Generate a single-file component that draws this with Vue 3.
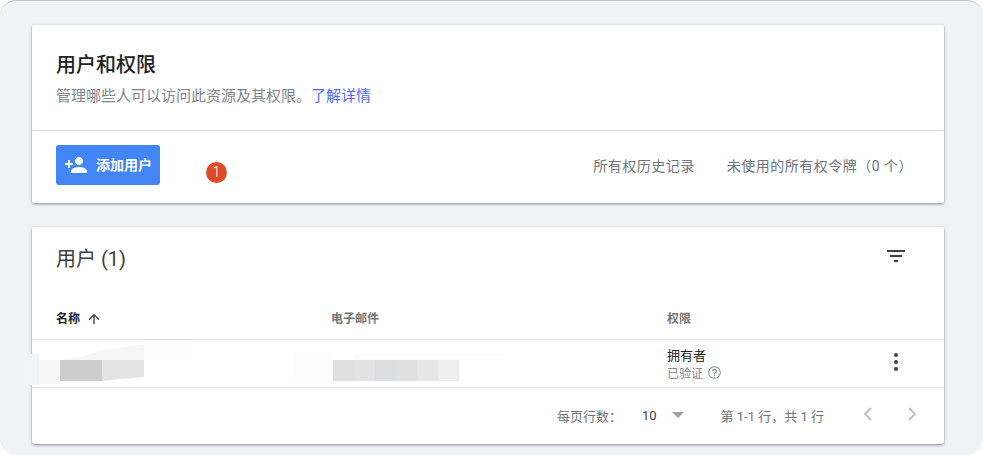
<script setup>
const nameBlocks = [
  { x: 24, y: 354, w: 15, h: 31, c: '#f0f3f8' },
  { x: 39, y: 360, w: 21, h: 24, c: '#f6f6f6' },
  { x: 60, y: 360, w: 42, h: 21, c: '#cdcdcd' },
  { x: 102, y: 360, w: 42, h: 21, c: '#e3e3e3', clip: 'polygon(0 0, 100% 0, 100% 80%, 0 100%)' },
  { x: 60, y: 344, w: 84, h: 16, c: '#f7f7f7', clip: 'polygon(0 100%, 25% 80%, 50% 40%, 100% 0, 100% 100%)' },
  { x: 144, y: 343, w: 48, h: 17, c: '#fdfdfd' }
]
const mailBlocks = [
  { x: 294, y: 352, w: 39, h: 30, c: '#fdfdfd' },
  { x: 333, y: 360, w: 21, h: 21, c: '#e0e0e0' },
  { x: 354, y: 360, w: 21, h: 21, c: '#e2e2e2' },
  { x: 375, y: 360, w: 21, h: 21, c: '#dcdddf' },
  { x: 396, y: 360, w: 21, h: 21, c: '#e0e0e0' },
  { x: 417, y: 360, w: 21, h: 21, c: '#e6e6e6' },
  { x: 438, y: 360, w: 21, h: 21, c: '#eeeeee' },
  { x: 354, y: 353, w: 150, h: 7, c: '#fdfdfd' }
]
const blocks = [...nameBlocks, ...mailBlocks]
const blockStyle = (b) => ({
  left: b.x + 'px',
  top: b.y + 'px',
  width: b.w + 'px',
  height: b.h + 'px',
  background: b.c,
  clipPath: b.clip || 'none'
})
</script>

<template>
  <div class="page">
    <div class="panel">
      <section class="card">
        <div class="intro">
          <h1 class="title">用户和权限</h1>
          <p class="sub">管理哪些人可以访问此资源及其权限。<a class="link">了解详情</a></p>
        </div>
        <div class="actions">
          <button class="add">
            <svg class="add-icon" viewBox="0 0 24 24" width="24" height="24">
              <path fill="#fff" d="M15 12c2.21 0 4-1.79 4-4s-1.79-4-4-4-4 1.79-4 4 1.79 4 4 4zm-9-2V7H4v3H1v2h3v3h2v-3h3v-2H6zm9 4c-2.67 0-8 1.34-8 4v2h16v-2c0-2.66-5.33-4-8-4z"/>
            </svg>
            <span>添加用户</span>
          </button>
          <div class="links">
            <span>所有权历史记录</span>
            <span>未使用的所有权令牌（0 个）</span>
          </div>
        </div>
      </section>

      <section class="card">
        <div class="list-head">
          <h2 class="list-title">用户 (1)</h2>
          <svg class="filter" viewBox="0 0 24 24" width="24" height="24">
            <path fill="#3c4043" d="M10 18h4v-2h-4v2zM3 6v2h18V6H3zm3 7h12v-2H6v2z"/>
          </svg>
        </div>
        <div class="row head-row">
          <div class="cell name-head">
            <span>名称</span>
            <svg viewBox="0 0 24 24" width="16" height="16">
              <path fill="#3c4043" d="M4 12l1.41 1.41L11 7.83V20h2V7.83l5.58 5.59L20 12l-8-8-8 8z"/>
            </svg>
          </div>
          <div class="cell mail-head">电子邮件</div>
          <div class="cell perm-head">权限</div>
        </div>
        <div class="row body-row">
          <div class="cell"></div>
          <div class="cell"></div>
          <div class="cell perm">
            <div class="owner">拥有者</div>
            <div class="verified">
              <span>已验证</span>
              <svg class="help" viewBox="0 0 24 24" width="15" height="15">
                <path fill="#80868b" d="M11 18h2v-2h-2v2zm1-16C6.48 2 2 6.48 2 12s4.48 10 10 10 10-4.48 10-10S17.52 2 12 2zm0 18.5c-4.69 0-8.5-3.81-8.5-8.5S7.31 3.5 12 3.5s8.5 3.81 8.5 8.5-3.81 8.5-8.5 8.5zM12 6c-2.21 0-4 1.79-4 4h2c0-1.1.9-2 2-2s2 .9 2 2c0 2-3 1.75-3 5h2c0-2.25 3-2.5 3-5 0-2.21-1.79-4-4-4z"/>
              </svg>
            </div>
          </div>
          <div class="more">
            <i></i><i></i><i></i>
          </div>
        </div>
        <div class="pager">
          <span class="rows-label">每页行数：</span>
          <span class="rows-value">10</span>
          <span class="caret"></span>
          <span class="range">第 1-1 行，共 1 行</span>
          <svg class="nav" viewBox="0 0 24 24" width="24" height="24">
            <path fill="none" stroke="#bdc1c6" stroke-width="2" d="M15 6l-6 6 6 6"/>
          </svg>
          <svg class="nav" viewBox="0 0 24 24" width="24" height="24">
            <path fill="none" stroke="#bdc1c6" stroke-width="2" d="M9 6l6 6-6 6"/>
          </svg>
        </div>
      </section>
    </div>

    <span class="badge">1</span>
    <div v-for="(b, i) in blocks" :key="i" class="block" :style="blockStyle(b)"></div>
  </div>
</template>

<style>
html, body {
  margin: 0;
  background: #fff;
}
</style>

<style scoped>
.page {
  position: relative;
  width: 983px;
  height: 455px;
  overflow: hidden;
  font-family: Roboto, "Noto Sans CJK SC", sans-serif;
}
.panel {
  box-sizing: border-box;
  height: 455px;
  padding: 24px 39px 0 32px;
  background: #eff2f7;
  border-top: 1px solid #c2c4c6;
  border-radius: 16px;
  display: flex;
  flex-direction: column;
  gap: 24px;
}
.card {
  background: #fff;
  border-radius: 2px;
  box-shadow: 0 1px 3px rgba(60, 64, 67, 0.6);
}
.intro {
  height: 106px;
  box-sizing: border-box;
  padding: 27px 24px 0;
  border-bottom: 1px solid #dadce0;
}
.title {
  margin: 0;
  font-size: 20px;
  line-height: 26px;
  font-weight: 500;
  color: #202124;
}
.sub {
  margin: 7px 0 0;
  font-size: 15px;
  line-height: 22px;
  color: #80868b;
}
.link {
  color: #4a6cf7;
}
.actions {
  height: 72px;
  box-sizing: border-box;
  padding: 14px 31px 0 24px;
  display: flex;
  justify-content: space-between;
  align-items: flex-start;
}
.add {
  width: 104px;
  height: 40px;
  padding: 0 0 0 8px;
  border: 0;
  border-radius: 3px;
  background: #4285f4;
  color: #fff;
  font: 700 14px/20px Roboto, "Noto Sans CJK SC", sans-serif;
  display: flex;
  align-items: center;
  gap: 8px;
}
.links {
  display: flex;
  gap: 32px;
  padding-top: 10px;
  font-size: 14px;
  line-height: 22px;
  letter-spacing: 0.5px;
  color: #70757a;
}
.list-head {
  height: 68px;
  box-sizing: border-box;
  padding: 19px 36px 0 24px;
  display: flex;
  justify-content: space-between;
  align-items: flex-start;
}
.list-title {
  margin: 0;
  font-size: 20px;
  line-height: 26px;
  font-weight: 400;
  color: #3c4043;
}
.filter {
  margin-top: -2px;
}
.row {
  display: grid;
  grid-template-columns: 275px 336px 1fr 72px;
  padding-left: 24px;
}
.head-row {
  height: 44px;
  border-bottom: 1px solid #dadce0;
  align-items: center;
  font-size: 12px;
  line-height: 16px;
  font-weight: 700;
  color: #757575;
}
.head-row .cell {
  margin-top: 4px;
}
.name-head {
  display: flex;
  align-items: center;
  gap: 6px;
  color: #202124;
  font-weight: 700;
}
.body-row {
  height: 47px;
  border-bottom: 1px solid #dadce0;
}
.perm {
  padding-top: 7px;
}
.owner {
  font-size: 13px;
  line-height: 18px;
  color: #202124;
}
.verified {
  display: flex;
  align-items: center;
  gap: 4px;
  margin-top: 1px;
  font-size: 12px;
  line-height: 16px;
  color: #80868b;
}
.help {
  margin-top: -3px;
}
.more {
  display: flex;
  flex-direction: column;
  align-items: center;
  gap: 3px;
  padding-top: 13px;
  width: 24px;
  margin-left: 12px;
}
.more i {
  width: 4px;
  height: 4px;
  border-radius: 50%;
  background: #3c4043;
}
.pager {
  height: 56px;
  box-sizing: border-box;
  padding: 0 20px 2px 0;
  display: flex;
  justify-content: flex-end;
  align-items: center;
  font-size: 13px;
  color: #70757a;
}
.rows-label {
  margin-right: 20px;
}
.rows-value {
  color: #3c4043;
  font-size: 13px;
  font-weight: 400;
  margin-right: 15px;
}
.caret {
  width: 0;
  height: 0;
  border-left: 6px solid transparent;
  border-right: 6px solid transparent;
  border-top: 6px solid #9aa0a6;
  margin-right: 37px;
}
.range {
  margin-right: 32px;
}
.nav {
  margin-top: -3px;
}
.nav + .nav {
  margin-left: 20px;
}
.badge {
  position: absolute;
  left: 206px;
  top: 162px;
  width: 21px;
  height: 21px;
  border-radius: 50%;
  background: #dd4b27;
  color: #fff;
  font-size: 14px;
  font-weight: 300;
  line-height: 21px;
  text-align: center;
}
.block {
  position: absolute;
}
</style>
